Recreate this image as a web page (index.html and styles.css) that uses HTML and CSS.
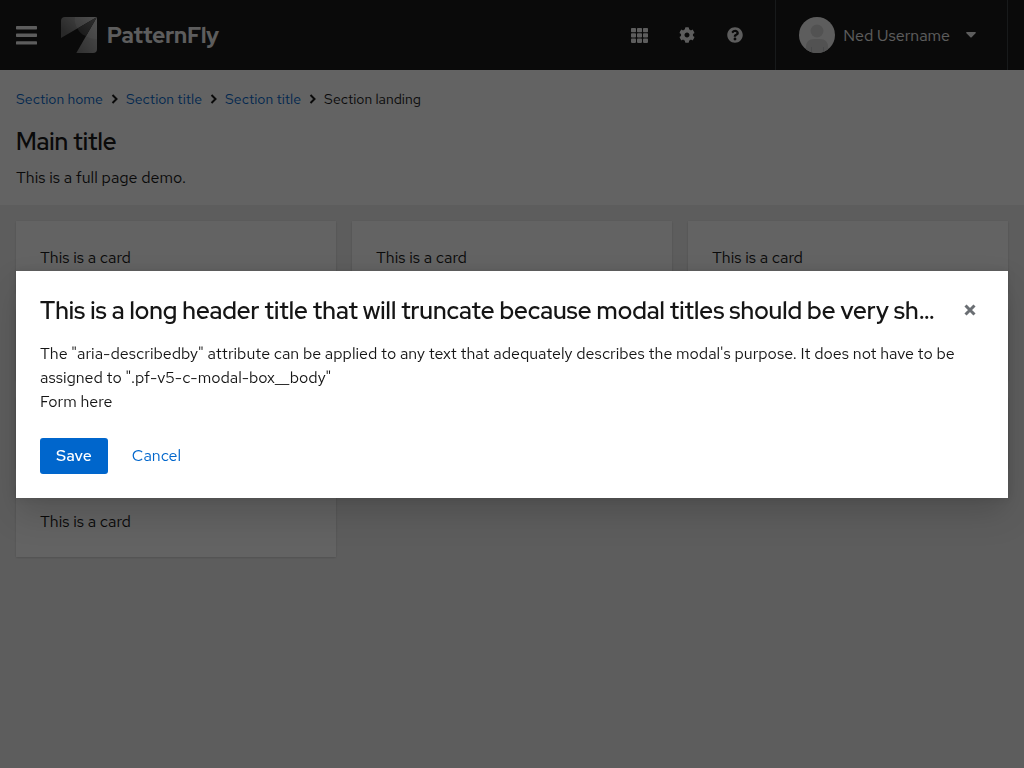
FILE: index.html
```html
<!DOCTYPE html>
<html lang="en">
<head>
<meta charset="utf-8">
<meta name="viewport" content="width=device-width, initial-scale=1">
<title>PatternFly modal</title>
<link rel="stylesheet" href="styles.css">
</head>
<body>
<div class="page">
  <header class="masthead">
    <button class="toggle" type="button" aria-label="Global navigation">
      <svg width="21" height="19" viewBox="0 0 21 19" fill="currentColor"><rect width="21" height="3.4" rx=".7"/><rect y="7.6" width="21" height="3.4" rx=".7"/><rect y="15.2" width="21" height="3.4" rx=".7"/></svg>
    </button>
    <a class="brand" href="#">
      <svg width="36" height="36" viewBox="0 0 36 36" aria-hidden="true">
        <defs>
          <linearGradient id="wing" x1="0" y1="0.6" x2="1" y2="0"><stop offset="0" stop-color="#666"/><stop offset="1" stop-color="#c4c4c4"/></linearGradient>
          <linearGradient id="tail" x1="0" y1="1" x2="0.8" y2="0"><stop offset="0" stop-color="#777"/><stop offset="1" stop-color="#c4c4c4"/></linearGradient>
          <linearGradient id="fold" x1="0" y1="1" x2="1" y2="0"><stop offset="0" stop-color="#3a3a3a"/><stop offset="1" stop-color="#777"/></linearGradient>
        </defs>
        <path d="M4 0H36L0 21V4Q0 0 4 0Z" fill="url(#wing)"/>
        <path d="M14 0H36L16.500 11.400Q13 6 14 0Z" fill="#fff" opacity=".16"/>
        <path d="M36 0V32Q36 36 32 36H15.300Z" fill="url(#tail)"/>
        <path d="M36 0V22Q29 22 25 19Z" fill="#fff" opacity=".16"/>
        <path d="M36 0L16.500 11.400Q19 17 25 19Z" fill="url(#fold)"/>
      </svg>
      <span class="brand-name">PatternFly</span>
    </a>
    <div class="tools">
      <button class="icon-button" type="button" aria-label="Applications">
        <svg width="17" height="15" viewBox="0 0 17 15" fill="currentColor"><rect width="5" height="4.300" rx=".8"/><rect x="6" width="5" height="4.300" rx=".8"/><rect x="12" width="5" height="4.300" rx=".8"/><rect y="5.300" width="5" height="4.300" rx=".8"/><rect x="6" y="5.300" width="5" height="4.300" rx=".8"/><rect x="12" y="5.300" width="5" height="4.300" rx=".8"/><rect y="10.600" width="5" height="4.300" rx=".8"/><rect x="6" y="10.600" width="5" height="4.300" rx=".8"/><rect x="12" y="10.600" width="5" height="4.300" rx=".8"/></svg>
      </button>
      <button class="icon-button" type="button" aria-label="Settings">
        <svg width="16" height="16" viewBox="0 0 512 512" fill="currentColor"><path d="M487.4 315.7l-42.600-24.600c4.300-23.200 4.300-47 0-70.200l42.600-24.600c4.900-2.800 7.100-8.600 5.500-14-11.100-35.600-30-67.800-54.700-94.600-3.800-4.100-10-5.100-14.800-2.300L380.800 110c-17.900-15.400-38.500-27.300-60.800-35.100V25.800c0-5.600-3.900-10.500-9.400-11.700-36.700-8.200-74.300-7.800-109.200 0-5.500 1.200-9.400 6.100-9.400 11.700V75c-22.200 7.900-42.800 19.800-60.800 35.100L88.700 85.500c-4.900-2.800-11-1.900-14.800 2.300-24.700 26.700-43.600 58.900-54.700 94.600-1.700 5.400.6 11.200 5.500 14L67.300 221c-4.300 23.200-4.300 47 0 70.200l-42.600 24.600c-4.900 2.800-7.100 8.600-5.500 14 11.100 35.600 30 67.800 54.700 94.600 3.800 4.100 10 5.100 14.800 2.300l42.600-24.600c17.900 15.400 38.500 27.300 60.800 35.100v49.200c0 5.600 3.900 10.500 9.400 11.700 36.700 8.200 74.300 7.800 109.200 0 5.500-1.200 9.400-6.100 9.400-11.700v-49.200c22.200-7.900 42.800-19.800 60.800-35.100l42.600 24.600c4.900 2.800 11 1.900 14.800-2.300 24.700-26.700 43.600-58.900 54.700-94.600 1.500-5.500-.7-11.300-5.600-14.100zM256 336c-44.100 0-80-35.900-80-80s35.900-80 80-80 80 35.900 80 80-35.900 80-80 80z"/></svg>
      </button>
      <button class="icon-button" type="button" aria-label="Help">
        <svg width="16" height="16" viewBox="0 0 512 512" fill="currentColor"><path d="M504 256c0 136.997-111.043 248-248 248S8 392.997 8 256C8 119.083 119.043 8 256 8s248 111.083 248 248zM262.655 90c-54.497 0-89.255 22.957-116.549 63.758-3.536 5.286-2.353 12.415 2.715 16.258l34.699 26.310c5.205 3.947 12.621 3.008 16.665-2.122 17.864-22.658 30.113-35.797 57.303-35.797 20.429 0 45.698 13.148 45.698 32.958 0 14.976-12.363 22.667-32.534 33.976C247.128 238.528 216 254.941 216 296v4c0 6.627 5.373 12 12 12h56c6.627 0 12-5.373 12-12v-1.333c0-28.462 83.186-29.647 83.186-106.667 0-58.002-60.165-102-116.531-102zM256 338c-25.365 0-46 20.635-46 46 0 25.364 20.635 46 46 46s46-20.636 46-46c0-25.365-20.635-46-46-46z"/></svg>
      </button>
    </div>
    <button class="user" type="button">
      <svg width="36" height="36" viewBox="0 0 36 36" aria-hidden="true"><defs><clipPath id="round"><circle cx="18" cy="18" r="18"/></clipPath></defs><g clip-path="url(#round)"><path fill="#f0f0f0" d="M0 0h36v36H0z"/><circle cx="18" cy="14" r="6.500" fill="#d2d2d2"/><path d="M7 36V30Q7 22 15 22H21Q29 22 29 30V36Z" fill="#d2d2d2"/><path d="M12.500 36V30M24.500 36V30" stroke="#b8bbbe" stroke-width="1"/></g></svg>
      <span class="user-name">Ned Username</span>
      <svg class="caret" width="10" height="6" viewBox="0 0 10 6" fill="currentColor" aria-hidden="true"><path d="M.8 0H9.200Q10.400 .2 9.500 1.200L5.700 5.200Q5 5.900 4.300 5.200L.5 1.200Q-.4 .2 .8 0Z"/></svg>
    </button>
  </header>
  <main class="main">
    <section class="intro">
      <nav aria-label="Breadcrumb">
        <ol class="breadcrumb">
          <li><a href="#">Section home</a></li>
          <li><svg width="7" height="10" viewBox="0 0 7 10" aria-hidden="true"><path d="M1.500 1L5.500 5L1.500 9"/></svg><a href="#">Section title</a></li>
          <li><svg width="7" height="10" viewBox="0 0 7 10" aria-hidden="true"><path d="M1.500 1L5.500 5L1.500 9"/></svg><a href="#">Section title</a></li>
          <li><svg width="7" height="10" viewBox="0 0 7 10" aria-hidden="true"><path d="M1.500 1L5.500 5L1.500 9"/></svg><span aria-current="page">Section landing</span></li>
        </ol>
      </nav>
      <h1 class="title">Main title</h1>
      <p>This is a full page demo.</p>
    </section>
    <section class="gallery">
      <article class="card">This is a card</article>
      <article class="card">This is a card</article>
      <article class="card">This is a card</article>
      <article class="card">This is a card</article>
      <article class="card">This is a card</article>
      <article class="card">This is a card</article>
      <article class="card">This is a card</article>
      <article class="card">This is a card</article>
      <article class="card">This is a card</article>
      <article class="card">This is a card</article>
    </section>
  </main>
</div>
<div class="backdrop">
  <div class="modal" role="dialog" aria-modal="true" aria-labelledby="modal-title" aria-describedby="modal-description">
    <header class="modal-header">
      <h2 class="title modal-title" id="modal-title">This is a long header title that will truncate because modal titles should be very short</h2>
      <button class="close" type="button" aria-label="Close">
        <svg width="12" height="12" viewBox="0 0 12 12" aria-hidden="true"><path d="M1.500 1.500L10.500 10.500M10.500 1.500L1.500 10.500"/></svg>
      </button>
    </header>
    <div class="modal-body">
      <p id="modal-description">The "aria-describedby" attribute can be applied to any text that adequately describes the modal's purpose. It does not have to be assigned to ".pf-v5-c-modal-box__body"</p>
      <p>Form here</p>
    </div>
    <footer class="modal-footer">
      <button class="button primary" type="button">Save</button>
      <button class="button link" type="button">Cancel</button>
    </footer>
  </div>
</div>
</body>
</html>
```
FILE: styles.css
```css
* {
  box-sizing: border-box;
}

body,
h1,
h2,
p,
ol {
  margin: 0;
  padding: 0;
}

body {
  font-family: "Red Hat Text", Roboto, sans-serif;
  font-size: 16px;
  line-height: 24px;
  color: #151515;
  background: #f0f0f0;
}

button {
  padding: 0;
  border: 0;
  background: none;
  font: inherit;
  color: inherit;
  cursor: pointer;
}

svg {
  display: block;
  flex: none;
}

a {
  color: #06c;
  text-decoration: none;
}

.page {
  display: flex;
  flex-direction: column;
  min-height: 100vh;
}

.masthead {
  display: flex;
  align-items: center;
  height: 70px;
  padding: 0 16px;
  color: #f0f0f0;
  background: #151515;
}

.brand {
  display: flex;
  align-items: center;
  gap: 10px;
  margin-left: 24px;
  color: #f0f0f0;
}

.brand-name {
  padding-top: 2px;
  font-family: "Red Hat Display", Roboto, sans-serif;
  font-size: 22px;
  font-weight: 800;
}

.tools {
  display: flex;
  gap: 16px;
  margin-left: auto;
  margin-right: 24px;
}

.icon-button {
  display: grid;
  place-items: center;
  width: 32px;
  height: 36px;
}

.user {
  display: flex;
  align-items: center;
  align-self: stretch;
  gap: 8px;
  padding: 0 31px 0 23px;
  border: solid #3c3f42;
  border-width: 0 1px;
}

.user-name {
  padding-top: 2px;
}

.caret {
  margin-left: 8px;
}

.main {
  flex: 1;
}

.intro {
  padding: 17px 16px 15px;
  background: #fff;
}

.breadcrumb {
  display: flex;
  flex-wrap: wrap;
  gap: 8px;
  margin-bottom: 15px;
  font-size: 14px;
  list-style: none;
}

.breadcrumb li {
  display: flex;
  align-items: center;
  gap: 8px;
}

.breadcrumb svg {
  fill: none;
  stroke: #151515;
  stroke-width: 2;
}

.title {
  font-family: "Red Hat Display", Roboto, sans-serif;
  font-size: 24px;
  font-weight: 600;
  line-height: 31px;
}

.intro .title {
  margin-bottom: 9px;
}

.gallery {
  display: grid;
  grid-template-columns: repeat(auto-fill, minmax(250px, 1fr));
  gap: 16px;
  padding: 16px;
}

.card {
  padding: 25px 24px 23px;
  background: #fff;
  box-shadow: 0 1px 2px rgba(3, 3, 3, 0.12), 0 0 2px rgba(3, 3, 3, 0.06);
}

.backdrop {
  position: fixed;
  inset: 0;
  display: flex;
  align-items: center;
  justify-content: center;
  padding: 16px;
  background: rgba(3, 3, 3, 0.62);
}

.modal {
  width: 100%;
  padding: 24px;
  background: #fff;
  box-shadow: 0 16px 32px rgba(3, 3, 3, 0.16), 0 0 8px rgba(3, 3, 3, 0.1);
}

.modal-header {
  display: flex;
  align-items: center;
  gap: 20px;
  margin-bottom: 16px;
}

.modal-title {
  flex: 1;
  min-width: 0;
  overflow: hidden;
  text-overflow: ellipsis;
  white-space: nowrap;
}

.close {
  display: grid;
  place-items: center;
  width: 28px;
  height: 28px;
}

.close svg {
  stroke: #6a6e73;
  stroke-width: 3;
}

.modal-footer {
  display: flex;
  gap: 8px;
  padding-top: 24px;
}

.button {
  padding: 6px 16px;
  border-radius: 3px;
}

.primary {
  font-weight: 500;
  color: #fff;
  background: #06c;
}

.link {
  color: #06c;
}
```
